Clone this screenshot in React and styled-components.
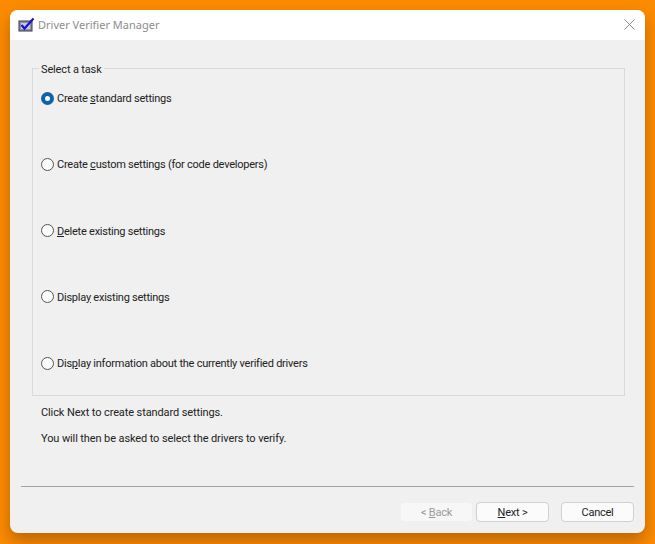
import React from "react";
import styled, { createGlobalStyle } from "styled-components";

const Global = createGlobalStyle`
  html, body { margin: 0; padding: 0; }
  body {
    background: #ff8c00;
    font-family: Roboto, "Liberation Sans", sans-serif;
    font-size: 11px;
    letter-spacing: -0.24px;
    color: #222222;
  }
`;

const Page = styled.div`
  width: 655px;
  height: 544px;
  padding: 10px 10px 11px;
  box-sizing: border-box;
  background: #fd8b02;
  overflow: hidden;
`;

const Window = styled.div`
  height: 523px;
  display: flex;
  flex-direction: column;
  background: #f0f0f0;
  border-radius: 8px;
  overflow: hidden;
  box-shadow: 0 8px 16px rgba(70, 35, 0, 0.36);
`;

const TitleBar = styled.div`
  flex: none;
  height: 30px;
  display: flex;
  align-items: center;
  padding: 0 10px 0 8px;
  background: #ffffff;
`;

const Title = styled.span`
  flex: 1;
  margin: 0 0 2px 3px;
  font-family: "Noto Sans", sans-serif;
  font-size: 11px;
  letter-spacing: 0;
  color: #8c8c8c;
`;

const Close = styled.svg`
  width: 11px;
  height: 11px;
  margin-bottom: 2px;
`;

const Body = styled.div`
  flex: 1;
  display: flex;
  flex-direction: column;
  padding: 20px 20px 0 22px;
`;

const Group = styled.fieldset`
  margin: 0;
  padding: 0 0 24px 8px;
  height: 336px;
  box-sizing: border-box;
  border: 1px solid #d9d9d9;
`;

const Legend = styled.legend`
  margin-left: -2px;
  padding: 0 2px;
  height: 16px;
  line-height: 20px;
  letter-spacing: -0.15px;
`;

const Options = styled.div`
  height: 281px;
  margin-top: 14px;
  display: flex;
  flex-direction: column;
  justify-content: space-between;
`;

const Option = styled.div`
  display: flex;
  align-items: center;
  height: 16px;
`;

const OptionLabel = styled.span`
  padding-top: 2px;
  line-height: 16px;
`;

const Radio = styled.span`
  flex: none;
  width: 13px;
  height: 13px;
  box-sizing: border-box;
  border-radius: 50%;
  margin-right: 3px;
  border: ${(p) => (p.$checked ? "4px solid #0f62a8" : "1px solid #555555")};
  background: #fbfbfb;
`;

const Notes = styled.div`
  margin: 9px 0 0 9px;
  display: flex;
  flex-direction: column;
  gap: 10px;
  letter-spacing: -0.11px;
`;

const Note = styled.div`
  line-height: 16px;
`;

const Footer = styled.div`
  margin: auto 11px 11px;
  display: flex;
  flex-direction: column;
`;

const Separator = styled.div`
  height: 1px;
  background: #a4a4a4;
`;

const Buttons = styled.div`
  margin-top: 15px;
  display: flex;
  justify-content: flex-end;
`;

const Button = styled.button`
  width: 73px;
  height: 20px;
  box-sizing: border-box;
  padding: 2px 0 0;
  margin-left: ${(p) => p.$gap || 0}px;
  font: inherit;
  letter-spacing: inherit;
  line-height: 16px;
  border-radius: 4px;
  border: 1px solid ${(p) => (p.disabled ? "#f0f0f0" : "#d0d0d0")};
  background: ${(p) => (p.disabled ? "#f7f7f7" : "#fbfbfb")};
  color: ${(p) => (p.disabled ? "#9a9a9a" : "#222222")};
`;

const AppIcon = () => (
  <svg width="17" height="16" viewBox="0 0 17 16">
    <rect x="1" y="4" width="13" height="10" fill="#8f8fb5" stroke="#3a3a3a" />
    <rect x="3" y="6" width="9" height="6" fill="#c9c9e6" />
    <path d="M3.5 8 L6.5 11.5 L15.5 1.5" fill="none" stroke="#1414c8" strokeWidth="2.2" />
  </svg>
);

const CloseIcon = () => (
  <Close viewBox="0 0 11 11">
    <path d="M0.5 0.5 L10.5 10.5 M10.5 0.5 L0.5 10.5" stroke="#8a8a8a" strokeWidth="1" fill="none" />
  </Close>
);

const options = [
  { before: "Create ", key: "s", after: "tandard settings", checked: true },
  { before: "Create ", key: "c", after: "ustom settings (for code developers)" },
  { before: "", key: "D", after: "elete existing settings" },
  { before: "Displa", key: "y", after: " existing settings" },
  { before: "Dis", key: "p", after: "lay information about the currently verified drivers" },
];

export default function App() {
  return (
    <Page>
      <Global />
      <Window>
        <TitleBar>
          <AppIcon />
          <Title>Driver Verifier Manager</Title>
          <CloseIcon />
        </TitleBar>
        <Body>
          <Group>
            <Legend>Select a task</Legend>
            <Options>
              {options.map((o) => (
                <Option key={o.after}>
                  <Radio $checked={o.checked} />
                  <OptionLabel>
                    {o.before}
                    <u>{o.key}</u>
                    {o.after}
                  </OptionLabel>
                </Option>
              ))}
            </Options>
          </Group>
          <Notes>
            <Note>Click Next to create standard settings.</Note>
            <Note>You will then be asked to select the drivers to verify.</Note>
          </Notes>
        </Body>
        <Footer>
          <Separator />
          <Buttons>
            <Button disabled>
              &lt; <u>B</u>ack
            </Button>
            <Button $gap={3}>
              <u>N</u>ext &gt;
            </Button>
            <Button $gap={12}>Cancel</Button>
          </Buttons>
        </Footer>
      </Window>
    </Page>
  );
}
